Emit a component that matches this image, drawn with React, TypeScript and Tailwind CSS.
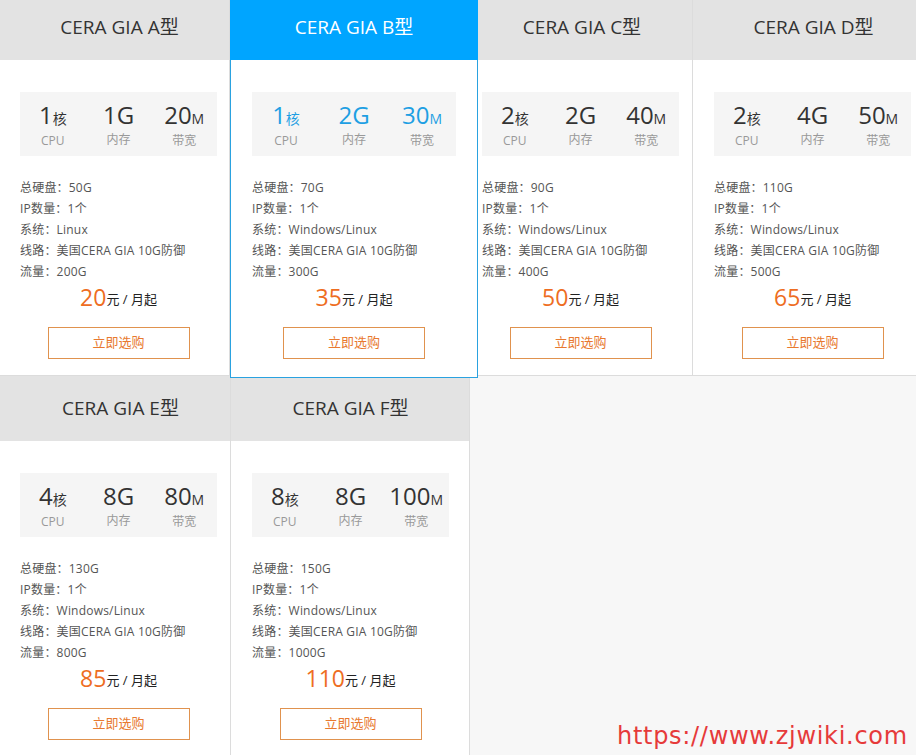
import React from "react";

type Plan = {
  name: string;
  cpu: string;
  mem: string;
  bw: string;
  disk: string;
  sys: string;
  flow: string;
  price: string;
};

const plans: Plan[] = [
  { name: "A", cpu: "1", mem: "1G", bw: "20", disk: "50G", sys: "Linux", flow: "200G", price: "20" },
  { name: "B", cpu: "1", mem: "2G", bw: "30", disk: "70G", sys: "Windows/Linux", flow: "300G", price: "35" },
  { name: "C", cpu: "2", mem: "2G", bw: "40", disk: "90G", sys: "Windows/Linux", flow: "400G", price: "50" },
  { name: "D", cpu: "2", mem: "4G", bw: "50", disk: "110G", sys: "Windows/Linux", flow: "500G", price: "65" },
  { name: "E", cpu: "4", mem: "8G", bw: "80", disk: "130G", sys: "Windows/Linux", flow: "800G", price: "85" },
  { name: "F", cpu: "8", mem: "8G", bw: "100", disk: "150G", sys: "Windows/Linux", flow: "1000G", price: "110" },
];

function Spec({ big, small, label, active }: { big: string; small?: string; label: string; active: boolean }) {
  return (
    <div className="flex-1 flex flex-col items-center">
      <div className={`leading-[26px] whitespace-nowrap ${active ? "text-[#1e9fe3]" : "text-[#333]"}`}>
        <span className="text-[24px]">{big}</span>
        {small ? <span className="text-[14px]">{small}</span> : null}
      </div>
      <div className="mt-[1px] text-[12px] leading-[16px] text-[#999]">{label}</div>
    </div>
  );
}

function Body({ p, active, boxW }: { p: Plan; active: boolean; boxW: string }) {
  return (
    <div className={`${boxW} flex flex-col`}>
      <div className="mt-[32px] h-[64px] bg-[#f5f5f5] flex pt-[10px]">
        <Spec big={p.cpu} small="核" label="CPU" active={active} />
        <Spec big={p.mem} label="内存" active={active} />
        <Spec big={p.bw} small="M" label="带宽" active={active} />
      </div>
      <div className="mt-[21px] text-[12px] leading-[21px] text-[#555] tracking-[0.2px]">
        <div>总硬盘：{p.disk}</div>
        <div>IP数量：1个</div>
        <div>系统：{p.sys}</div>
        <div>线路：美国CERA GIA 10G防御</div>
        <div>流量：{p.flow}</div>
      </div>
      <div className="mt-[4px] h-[22px] flex items-end justify-center leading-[22px]">
        <span className="text-[23px] text-[#ee6d22] leading-[22px]">{p.price}</span>
        <span className="text-[13px] text-[#222] leading-[18px]">元 / 月起</span>
      </div>
      <div className="mt-[19px] flex justify-center">
        <div className="w-[142px] h-[32px] border border-[#e0924e] flex items-center justify-center text-[13px] text-[#e8792f]">
          立即选购
        </div>
      </div>
    </div>
  );
}

function Card({ p, w, pl, h, hp }: { p: Plan; w: string; pl: string; h: string; hp: string }) {
  return (
    <div className={`${w} ${h} shrink-0 bg-white border-r border-b border-[#dcdcdc] flex flex-col`}>
      <div className={`h-[65px] shrink-0 bg-[#e3e3e3] flex items-center justify-center text-[19px] text-[#333] ${hp}`}>
        CERA GIA {p.name}型
      </div>
      <div className={pl}>
        <Body p={p} active={false} boxW="w-[197px]" />
      </div>
    </div>
  );
}

function ActiveCard({ p }: { p: Plan }) {
  return (
    <div className="relative z-10 w-[248px] h-[383px] shrink-0 mr-[-17px] flex flex-col">
      <div className="h-[65px] shrink-0 bg-[#00a5ff] flex items-center justify-center text-[19px] text-white">
        CERA GIA {p.name}型
      </div>
      <div className="flex-1 bg-white border-x border-b border-[#2aa2e0] px-[21px]">
        <Body p={p} active={true} boxW="w-full" />
      </div>
    </div>
  );
}

export default function App() {
  return (
    <div
      className="relative w-[916px] h-[755px] overflow-hidden bg-[#f7f7f7]"
      style={{ fontFamily: '"Open Sans", "Noto Sans CJK SC", sans-serif' }}
    >
      <div className="mt-[-5px] ml-[-1px] w-[930px] h-[381px] flex items-start">
        <Card p={plans[0]} w="w-[231px]" pl="pl-[21px]" h="h-[381px]" hp="pl-[11px]" />
        <ActiveCard p={plans[1]} />
        <Card p={plans[2]} w="w-[232px]" pl="pl-[21px]" h="h-[381px]" hp="pl-[11px]" />
        <Card p={plans[3]} w="w-[231px]" pl="pl-[21px]" h="h-[381px]" hp="pl-[11px]" />
      </div>
      <div className="flex items-start">
        <Card p={plans[4]} w="w-[231px]" pl="pl-[20px]" h="h-[390px]" hp="pl-[11px]" />
        <Card p={plans[5]} w="w-[239px]" pl="pl-[21px]" h="h-[390px]" hp="pl-[1px]" />
      </div>
      <div
        className="absolute left-[617px] top-[721px] text-[24px] leading-[30px] tracking-[0.7px] text-[#e63a3a]"
        style={{ fontFamily: '"DejaVu Sans", sans-serif' }}
      >
        https://www.zjwiki.com
      </div>
    </div>
  );
}
